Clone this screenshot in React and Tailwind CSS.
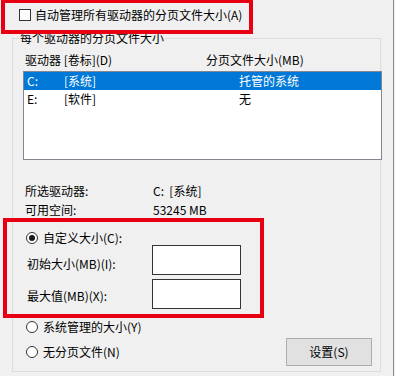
import React from 'react';

const Radio = ({ checked }) => (
    <span className="w-[12px] h-[12px] rounded-full border border-[#333] bg-white flex items-center justify-center shrink-0">
        {checked && <span className="w-[6px] h-[6px] rounded-full bg-[#1a1a1a]" />}
    </span>
);

const drives = [
    { letter: 'C:', label: '[系统]', size: '托管的系统', selected: true },
    { letter: 'E:', label: '[软件]', size: '无', selected: false },
];

const App = () => {
    return (
        <div className="relative w-[395px] h-[376px] bg-[#f0f0f0] overflow-hidden text-[12px] leading-[16px] text-black font-['Noto_Sans_CJK_SC','Noto_Sans',sans-serif]">
            <div className="w-[394px] h-full border-r border-[#8c8c8c]">
                {/* Auto manage checkbox */}
                <div className="h-[38px] pt-[8px] pl-[19px] flex items-start gap-[4px]">
                    <span className="mt-[1px] w-[12px] h-[12px] border border-[#333] bg-white shrink-0" />
                    <span className="leading-[14px]">自动管理所有驱动器的分页文件大小(A)</span>
                </div>

                {/* Group box */}
                <div className="relative ml-[12px] w-[369px] h-[334px] border border-[#dcdcdc]">
                    <span className="absolute -top-[8px] left-[6px] px-[1px] bg-[#f0f0f0] leading-[14px]">
                        每个驱动器的分页文件大小
                    </span>

                    <div className="mt-[13px] h-[16px] flex">
                        <span className="pl-[12px] w-[193px]">驱动器 [卷标](D)</span>
                        <span>分页文件大小(MB)</span>
                    </div>

                    {/* Drive list */}
                    <div className="mt-[3px] ml-[10px] w-[359px] h-[89px] border border-[#828790] bg-white">
                        {drives.map(d => (
                            <div
                                key={d.letter}
                                className={`h-[18px] flex items-center ${d.selected ? 'bg-[#0078d7] text-white' : ''}`}
                            >
                                <span className="pl-[3px] w-[40px]">{d.letter}</span>
                                <span className="w-[175px]">{d.label}</span>
                                <span>{d.size}</span>
                            </div>
                        ))}
                    </div>

                    {/* Selected drive info */}
                    <div className="mt-[23px] h-[16px] flex">
                        <span className="pl-[12px] w-[140px]">所选驱动器:</span>
                        <span>C:&nbsp;&nbsp;[系统]</span>
                    </div>
                    <div className="mt-[3px] h-[16px] flex">
                        <span className="pl-[12px] w-[140px]">可用空间:</span>
                        <span>53245 MB</span>
                    </div>

                    {/* Custom size */}
                    <div className="mt-[12px] h-[15px] pl-[13px] flex items-center gap-[5px]">
                        <Radio checked />
                        <span>自定义大小(C):</span>
                    </div>
                    <div className="h-[30px] flex items-start">
                        <span className="mt-[11px] pl-[14px] w-[139px]">初始大小(MB)(I):</span>
                        <span className="w-[89px] h-[30px] border border-[#333] bg-white" />
                    </div>
                    <div className="mt-[4px] h-[30px] flex items-start">
                        <span className="mt-[9px] pl-[14px] w-[139px]">最大值(MB)(X):</span>
                        <span className="w-[89px] h-[30px] border border-[#333] bg-white" />
                    </div>

                    <div className="mt-[10px] h-[15px] pl-[13px] flex items-center gap-[5px]">
                        <Radio />
                        <span>系统管理的大小(Y)</span>
                    </div>
                    <div className="mt-[4px] h-[28px] pl-[13px] pr-[8px] flex items-center gap-[5px]">
                        <Radio />
                        <span>无分页文件(N)</span>
                        <button className="ml-auto w-[86px] h-[28px] border border-[#adadad] bg-[#e1e1e1] flex items-center justify-center">
                            设置(S)
                        </button>
                    </div>
                </div>
            </div>

            {/* Annotation boxes */}
            <div className="absolute left-[1px] -top-[1px] w-[252px] h-[35px] border-4 border-[#e60012]" />
            <div className="absolute left-[3px] top-[218px] w-[261px] h-[100px] border-4 border-[#e60012]" />
        </div>
    );
};

export default App;
